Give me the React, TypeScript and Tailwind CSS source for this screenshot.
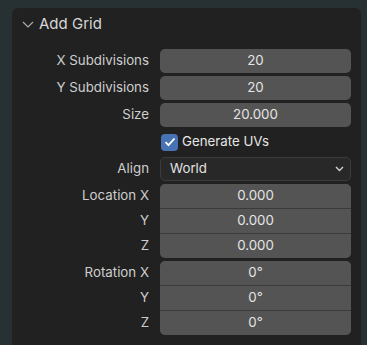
const font = { fontFamily: "Inter, 'Noto Sans', sans-serif" };

function Row({ label, children }: { label: string; children: React.ReactNode }) {
  return (
    <div className="flex h-[24px] items-center">
      <div className="w-[137px] shrink-0 text-right text-[13.3px] text-[#cecece]">{label}</div>
      <div className="ml-[11px] flex h-full flex-1">{children}</div>
    </div>
  );
}

function NumField({ value }: { value: string }) {
  return (
    <div className="flex h-full w-full items-center justify-center rounded-[5px] bg-[#545454] text-[13.3px] text-[#e6e6e6]">
      {value}
    </div>
  );
}

function Group({ labels, values }: { labels: string[]; values: string[] }) {
  return (
    <div className="flex">
      <div className="flex w-[137px] shrink-0 flex-col">
        {labels.map((l, i) => (
          <div
            key={i}
            className={`flex h-[24px] items-center justify-end text-[13.3px] text-[#cecece] ${i > 0 ? "mt-px" : ""}`}
          >
            {l}
          </div>
        ))}
      </div>
      <div className="ml-[11px] flex flex-1 flex-col overflow-hidden rounded-[5px] bg-[#3a3a3a]">
        {values.map((v, i) => (
          <div
            key={i}
            className={`flex h-[24px] items-center justify-center bg-[#545454] text-[13.3px] text-[#e6e6e6] ${i > 0 ? "mt-px" : ""}`}
          >
            {v}
          </div>
        ))}
      </div>
    </div>
  );
}

export default function App() {
  return (
    <div className="flex h-[345px] w-[367px] bg-[#273033] pl-[12px] pr-[6px] pt-[8px]" style={font}>
      <div className="flex flex-1 flex-col rounded-t-[6px] bg-[#212121] pr-[10px]">
        {/* header */}
        <div className="flex h-[32px] items-center">
          <svg width="12" height="7" viewBox="0 0 12 7" className="ml-[10px]">
            <path d="M1 1 L6 6 L11 1" fill="none" stroke="#b0b0b0" strokeWidth="1.1" />
          </svg>
          <span className="ml-[5px] text-[15px] text-[#d6d6d6]">Add Grid</span>
        </div>

        <div className="mt-[9px] flex flex-col gap-[3px]">
          <Row label="X Subdivisions">
            <NumField value="20" />
          </Row>
          <Row label="Y Subdivisions">
            <NumField value="20" />
          </Row>
          <Row label="Size">
            <NumField value="20.000" />
          </Row>
          <Row label="">
            <div className="flex items-center">
              <div className="ml-px flex h-[17px] w-[17px] items-center justify-center rounded-[4px] bg-[#4772b3]">
                <svg width="12" height="10" viewBox="0 0 12 10">
                  <path d="M1.5 5.2 L4.5 8.2 L10.5 1.5" fill="none" stroke="#ffffff" strokeWidth="1.8" />
                </svg>
              </div>
              <span className="ml-[4px] text-[13.3px] text-[#e6e6e6]">Generate UVs</span>
            </div>
          </Row>
          <Row label="Align">
            <div className="flex h-full w-full items-center justify-between rounded-[5px] border border-[#3c3c3c] bg-[#282828] pl-[9px] pr-[6px] text-[13.3px] text-[#e2e2e2]">
              <span>World</span>
              <svg width="9" height="6" viewBox="0 0 9 6">
                <path d="M1 1 L4.5 4.5 L8 1" fill="none" stroke="#d0d0d0" strokeWidth="1.4" />
              </svg>
            </div>
          </Row>
          <Group labels={["Location X", "Y", "Z"]} values={["0.000", "0.000", "0.000"]} />
          <Group labels={["Rotation X", "Y", "Z"]} values={["0°", "0°", "0°"]} />
        </div>
      </div>
    </div>
  );
}
